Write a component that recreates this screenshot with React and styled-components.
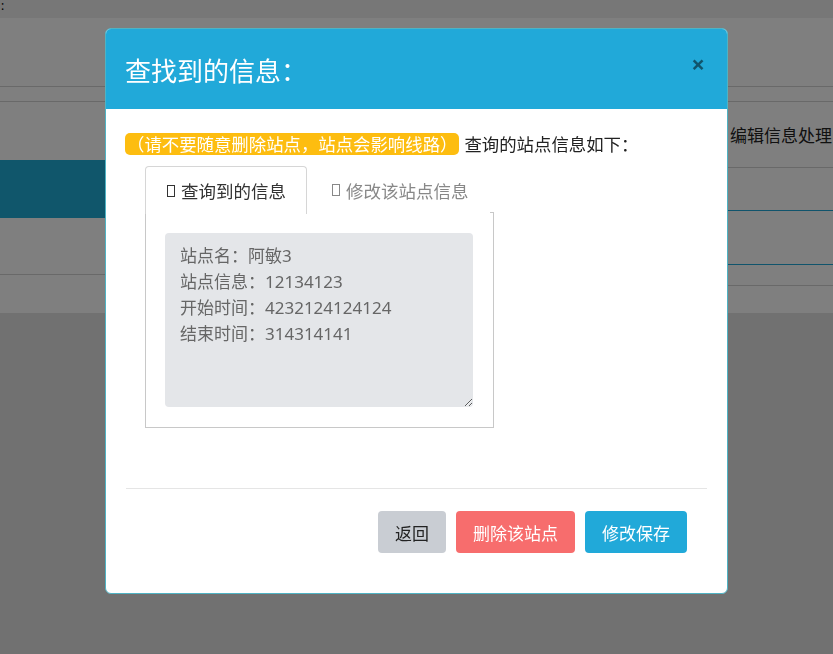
import styled, { createGlobalStyle } from "styled-components";

const GlobalStyle = createGlobalStyle`
    html, body {
        margin: 0;
        padding: 0;
        background: #e2e2e2;
        font-family: "Noto Sans", "Noto Sans CJK SC", sans-serif;
    }
    * { box-sizing: border-box; }
`

export default function App() {
    return (
        <>
            <GlobalStyle />
            <Page>
                <TopBar>:</TopBar>
                <PageBody>
                    <NavArea />
                    <SubStrip />
                    <Columns>
                        <Sidebar>
                            <SideItem $active />
                            <SideItem />
                        </Sidebar>
                        <Main>
                            <MainHead>编辑信息处理</MainHead>
                            <MainRow $h={43} $line="#21a9d9" />
                            <MainRow $h={54} $line="#21a9d9" />
                            <MainRow $h={21} $line="#d2d2d2" />
                        </Main>
                    </Columns>
                </PageBody>
            </Page>

            <Overlay>
                <Modal>
                    <ModalHeader>
                        <ModalTitle>查找到的信息：</ModalTitle>
                        <CloseButton>×</CloseButton>
                    </ModalHeader>
                    <ModalBody>
                        <NoticeLine>
                            <Badge>（请不要随意删除站点，站点会影响线路）</Badge>
                            <span>查询的站点信息如下：</span>
                        </NoticeLine>
                        <TabsWrap>
                            <TabList>
                                <Tab $active><IconBox />查询到的信息</Tab>
                                <Tab><IconBox />修改该站点信息</Tab>
                            </TabList>
                            <TabPanel>
                                <InfoArea
                                    readOnly
                                    value={"站点名：阿敏3\n站点信息：12134123\n开始时间：4232124124124\n结束时间：314314141"}
                                />
                            </TabPanel>
                        </TabsWrap>
                    </ModalBody>
                    <ModalFooter>
                        <Button $bg="#c9cdd3" $color="#222">返回</Button>
                        <Button $bg="#f76d6d" $color="#fff">删除该站点</Button>
                        <Button $bg="#21a9d9" $color="#fff">修改保存</Button>
                    </ModalFooter>
                </Modal>
            </Overlay>
        </>
    )
}

const Page = styled.div`
    width: 100%;
`

const TopBar = styled.div`
    height: 18px;
    background: #eeeeee;
    font-size: 12px;
    line-height: 12px;
    padding-left: 1px;
    color: #000;
`

const PageBody = styled.div`
    background: #fff;
    height: 295px;
`

const NavArea = styled.div`
    height: 69px;
    border-bottom: 1px solid #d2d2d2;
`

const SubStrip = styled.div`
    height: 15px;
    border-bottom: 1px solid #d2d2d2;
`

const Columns = styled.div`
    display: grid;
    grid-template-columns: 220px 1fr;
`

const Sidebar = styled.div`
    display: flex;
    flex-direction: column;
    padding-top: 58px;
`

const SideItem = styled.div`
    height: ${p => p.$active ? "58px" : "57px"};
    background: ${p => p.$active ? "#21acd6" : "transparent"};
    border-bottom: 1px solid ${p => p.$active ? "#21acd6" : "#d2d2d2"};
`

const Main = styled.div`
    display: flex;
    flex-direction: column;
`

const MainHead = styled.div`
    height: 66px;
    border-bottom: 1px solid #d2d2d2;
    padding-left: 510px;
    display: flex;
    align-items: center;
    font-size: 17px;
    color: #222;
    white-space: nowrap;
    overflow: hidden;
    font-family: "Noto Sans CJK SC", sans-serif;
`

const MainRow = styled.div`
    height: ${p => p.$h}px;
    border-bottom: 1px solid ${p => p.$line};
`

const Overlay = styled.div`
    position: fixed;
    inset: 0;
    background: rgba(0, 0, 0, 0.5);
    padding-top: 28px;
`

const Modal = styled.div`
    width: 623px;
    margin: 0 auto;
    background: #fff;
    border: 1px solid #4fb3c4;
    border-radius: 6px;
    overflow: hidden;
`

const ModalHeader = styled.div`
    height: 80px;
    background: #21a9d9;
    display: flex;
    align-items: center;
    justify-content: space-between;
    padding: 0 20px 0 19px;
`

const ModalTitle = styled.h4`
    margin: 0;
    font-size: 26px;
    font-weight: 400;
    color: #fff;
    font-family: "Noto Sans CJK SC", sans-serif;
`

const CloseButton = styled.span`
    font-size: 24px;
    font-weight: 700;
    color: rgba(0, 0, 0, 0.5);
    line-height: 1;
    margin-top: -11px;
    margin-right: 2px;
`

const ModalBody = styled.div`
    padding: 24px 20px 60px 19px;
`

const NoticeLine = styled.div`
    display: flex;
    align-items: center;
    gap: 5px;
    font-size: 17.4px;
    line-height: 22px;
    color: #222;
    font-family: "Noto Sans CJK SC", sans-serif;
`

const Badge = styled.span`
    background: #fdbd10;
    color: #fff;
    border-radius: 5px;
    padding: 0 2px;
`

const TabsWrap = styled.div`
    margin: 11px 0 0 20px;
    width: 349px;
`

const TabList = styled.div`
    display: flex;
    height: 47px;
    border-bottom: 1px solid #c8c8c8;
`

const Tab = styled.div`
    display: flex;
    align-items: center;
    gap: 6px;
    padding: 0 20px 0 22px;
    font-size: 17.5px;
    color: ${p => p.$active ? "#333" : "#888"};
    font-family: "Noto Sans CJK SC", sans-serif;
    background: #fff;
    border: 1px solid ${p => p.$active ? "#d6d6d6" : "transparent"};
    border-bottom: none;
    border-radius: 4px 4px 0 0;
    margin-bottom: ${p => p.$active ? "-1px" : "0"};
    height: ${p => p.$active ? "48px" : "47px"};
    padding-left: ${p => p.$active ? "21px" : "24px"};
`

const IconBox = styled.span`
    display: inline-block;
    width: 8px;
    height: 12px;
    border: 1px solid currentColor;
`

const TabPanel = styled.div`
    border: 1px solid #c8c8c8;
    border-top: none;
    padding: 20px 20px 20px 19px;
`

const InfoArea = styled.textarea`
    display: block;
    width: 308px;
    height: 174px;
    background: #e4e6e9;
    border: none;
    border-radius: 4px;
    padding: 10px 15px;
    font-size: 17px;
    line-height: 26px;
    color: #666;
    font-family: "Noto Sans", "Noto Sans CJK SC", sans-serif;
    outline: none;
`

const ModalFooter = styled.div`
    margin: 0 20px;
    border-top: 1px solid #e5e5e5;
    padding: 22px 20px 40px;
    display: flex;
    justify-content: flex-end;
    gap: 10px;
`

const Button = styled.button`
    height: 42px;
    padding: 0 17px;
    border: none;
    border-radius: 4px;
    background: ${p => p.$bg};
    color: ${p => p.$color};
    font-size: 17px;
    font-family: "Noto Sans CJK SC", sans-serif;
`
